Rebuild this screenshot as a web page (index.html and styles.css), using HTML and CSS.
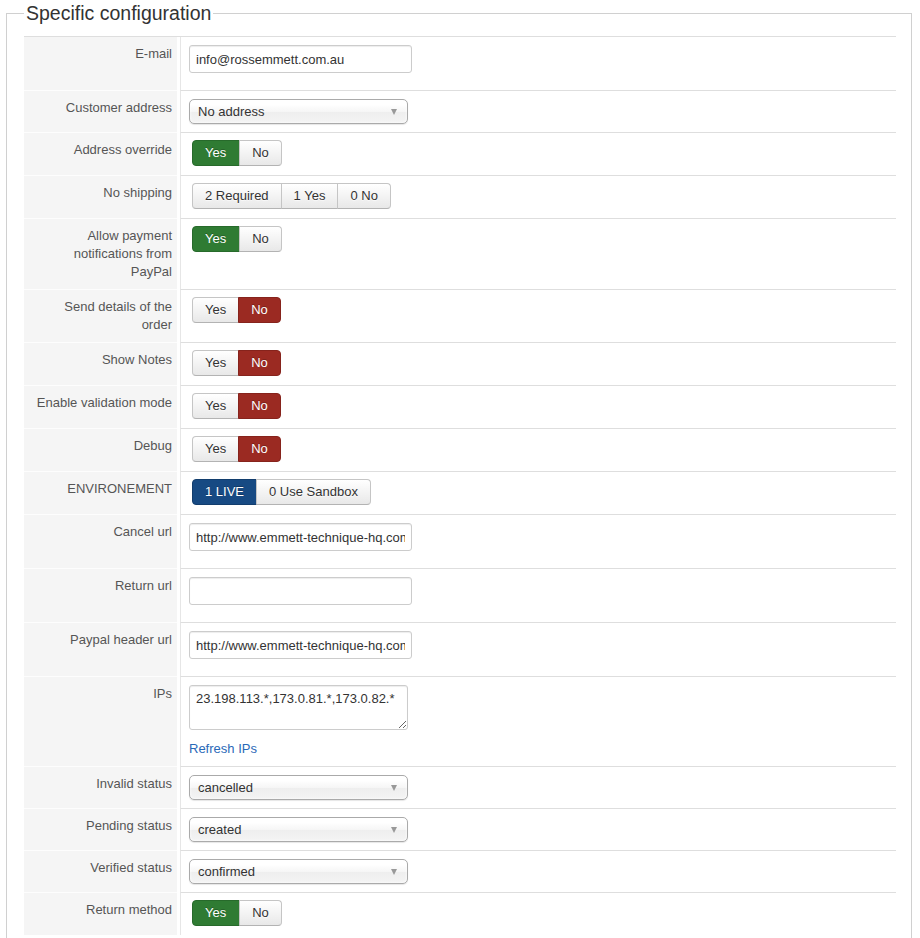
FILE: index.html
```html
<!DOCTYPE html>
<html lang="en">
<head>
<meta charset="utf-8">
<title>Specific configuration</title>
<link rel="stylesheet" href="styles.css">
</head>
<body>
<fieldset class="config">
  <legend class="config-legend">Specific configuration</legend>
  <div class="config-table">

    <div class="row">
      <div class="label">E-mail</div>
      <div class="value"><input class="text-input" type="text" value="info@rossemmett.com.au"></div>
    </div>

    <div class="row">
      <div class="label">Customer address</div>
      <div class="value"><div class="select"><span>No address</span><span class="caret"></span></div></div>
    </div>

    <div class="row">
      <div class="label">Address override</div>
      <div class="value"><div class="btn-group"><span class="btn btn-yes">Yes</span><span class="btn">No</span></div></div>
    </div>

    <div class="row">
      <div class="label">No shipping</div>
      <div class="value"><div class="btn-group"><span class="btn">2 Required</span><span class="btn">1 Yes</span><span class="btn">0 No</span></div></div>
    </div>

    <div class="row">
      <div class="label">Allow payment notifications from PayPal</div>
      <div class="value"><div class="btn-group"><span class="btn btn-yes">Yes</span><span class="btn">No</span></div></div>
    </div>

    <div class="row">
      <div class="label">Send details of the order</div>
      <div class="value"><div class="btn-group"><span class="btn">Yes</span><span class="btn btn-no">No</span></div></div>
    </div>

    <div class="row">
      <div class="label">Show Notes</div>
      <div class="value"><div class="btn-group"><span class="btn">Yes</span><span class="btn btn-no">No</span></div></div>
    </div>

    <div class="row">
      <div class="label">Enable validation mode</div>
      <div class="value"><div class="btn-group"><span class="btn">Yes</span><span class="btn btn-no">No</span></div></div>
    </div>

    <div class="row">
      <div class="label">Debug</div>
      <div class="value"><div class="btn-group"><span class="btn">Yes</span><span class="btn btn-no">No</span></div></div>
    </div>

    <div class="row">
      <div class="label">ENVIRONEMENT</div>
      <div class="value"><div class="btn-group"><span class="btn btn-live">1 LIVE</span><span class="btn">0 Use Sandbox</span></div></div>
    </div>

    <div class="row">
      <div class="label">Cancel url</div>
      <div class="value"><input class="text-input" type="text" value="http://www.emmett-technique-hq.com/index.php"></div>
    </div>

    <div class="row">
      <div class="label">Return url</div>
      <div class="value"><input class="text-input" type="text" value=""></div>
    </div>

    <div class="row">
      <div class="label">Paypal header url</div>
      <div class="value"><input class="text-input" type="text" value="http://www.emmett-technique-hq.com/images/logo.png"></div>
    </div>

    <div class="row">
      <div class="label">IPs</div>
      <div class="value">
        <textarea class="ips">23.198.113.*,173.0.81.*,173.0.82.*</textarea>
        <a class="link" href="#">Refresh IPs</a>
      </div>
    </div>

    <div class="row">
      <div class="label">Invalid status</div>
      <div class="value"><div class="select"><span>cancelled</span><span class="caret"></span></div></div>
    </div>

    <div class="row">
      <div class="label">Pending status</div>
      <div class="value"><div class="select"><span>created</span><span class="caret"></span></div></div>
    </div>

    <div class="row">
      <div class="label">Verified status</div>
      <div class="value"><div class="select"><span>confirmed</span><span class="caret"></span></div></div>
    </div>

    <div class="row">
      <div class="label">Return method</div>
      <div class="value"><div class="btn-group"><span class="btn btn-yes">Yes</span><span class="btn">No</span></div></div>
    </div>

  </div>
</fieldset>
</body>
</html>
```

FILE: styles.css
```css
html, body {
  margin: 0;
  padding: 0;
  background: #fff;
}

body {
  font-family: "Liberation Sans", Arial, sans-serif;
  font-size: 13px;
  line-height: 18px;
  color: #333;
}

.config {
  margin: 0 8px 0 6px;
  padding: 10px 15px 30px 17px;
  border: 1px solid #d0d0d0;
  min-width: 0;
}

.config-legend {
  padding: 0 2px;
  font-size: 19.5px;
  line-height: 26px;
  color: #333;
}

.config-table {
  border-top: 1px solid #dedede;
}

.row {
  display: flex;
  align-items: stretch;
}

.row + .row .label {
  border-top: 1px solid #fdfdfd;
}

.row + .row .value {
  border-top: 1px solid #dedede;
}

.label {
  width: 153px;
  flex: none;
  box-sizing: border-box;
  padding: 8px 5px 8px 10px;
  background: #f5f5f5;
  color: #555;
  text-align: right;
}

.value {
  flex: 1;
  margin-left: 3px;
  padding: 8px;
  border-left: 1px solid #e6e6e6;
}

/* text fields */
.text-input {
  display: block;
  box-sizing: border-box;
  width: 223px;
  height: 28px;
  margin: 0 0 9px;
  padding: 4px 6px;
  border: 1px solid #ccc;
  border-radius: 3px;
  box-shadow: inset 0 1px 1px rgba(0, 0, 0, 0.075);
  font-family: inherit;
  font-size: 13px;
  color: #333;
  background: #fff;
}

.ips {
  display: block;
  box-sizing: border-box;
  width: 219px;
  height: 45px;
  margin: 0 0 10px;
  padding: 4px 6px;
  border: 1px solid #ccc;
  border-radius: 3px;
  box-shadow: inset 0 1px 1px rgba(0, 0, 0, 0.075);
  font-family: inherit;
  font-size: 13px;
  line-height: 18px;
  color: #333;
}

.link {
  color: #2a69b8;
  text-decoration: none;
}

/* dropdowns */
.select {
  display: flex;
  align-items: center;
  box-sizing: border-box;
  width: 219px;
  height: 25px;
  padding: 0 10px 0 8px;
  border: 1px solid #aaa;
  border-radius: 5px;
  background: linear-gradient(#ffffff 20%, #f6f6f6 50%, #eeeeee 52%, #f4f4f4 100%);
  box-shadow: 0 0 3px #fff inset, 0 1px 1px rgba(0, 0, 0, 0.1);
  color: #333;
}

.caret {
  margin-left: auto;
  width: 0;
  height: 0;
  border-left: 3.5px solid transparent;
  border-right: 3.5px solid transparent;
  border-top: 6px solid #999;
}

/* radio button groups */
.btn-group {
  display: inline-flex;
  margin: -1px 0 1px 3px;
}

.btn {
  display: block;
  box-sizing: border-box;
  height: 26px;
  padding: 3px 12px;
  line-height: 18px;
  border: 1px solid #c5c5c5;
  border-bottom-color: #b3b3b3;
  background: linear-gradient(#ffffff, #e8e8e8);
  color: #333;
  text-shadow: 0 1px 1px rgba(255, 255, 255, 0.75);
  white-space: nowrap;
}

.btn + .btn {
  margin-left: -1px;
}

.btn:first-child {
  border-radius: 4px 0 0 4px;
}

.btn:last-child {
  border-radius: 0 4px 4px 0;
}

.btn-yes {
  padding-right: 13px;
  background: #2f7b33;
  border-color: #276a2b;
  color: #fff;
  text-shadow: 0 -1px 0 rgba(0, 0, 0, 0.25);
}

.btn-no {
  background: #9b2a22;
  border-color: #86231c;
  color: #fff;
  text-shadow: 0 -1px 0 rgba(0, 0, 0, 0.25);
}

.btn-live {
  background: #174a83;
  border-color: #123d6d;
  color: #fff;
  text-shadow: 0 -1px 0 rgba(0, 0, 0, 0.25);
}
```
